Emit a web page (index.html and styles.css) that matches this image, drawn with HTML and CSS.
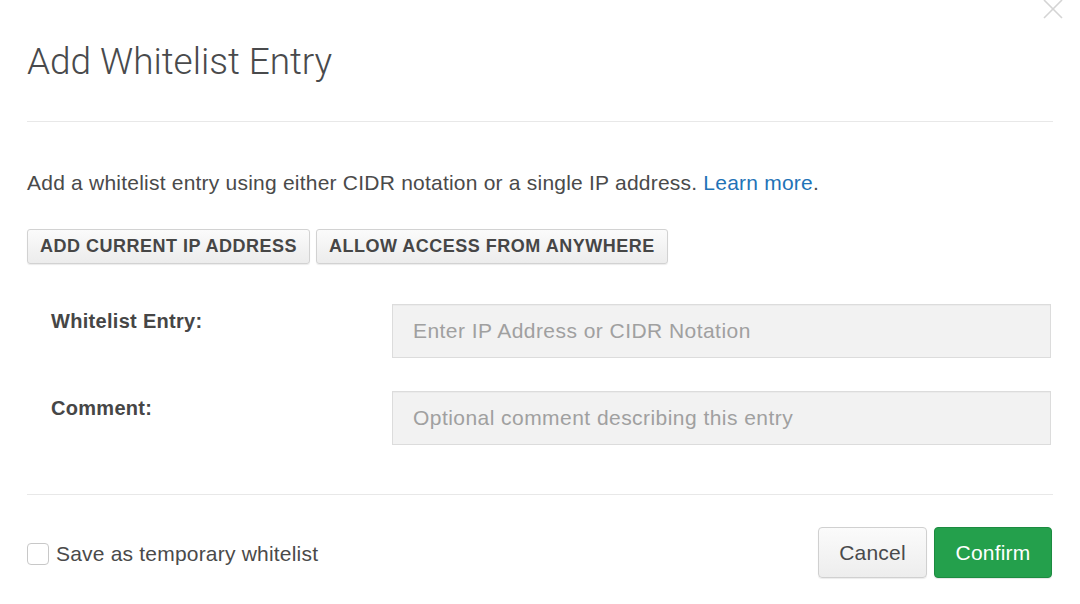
FILE: index.html
```html
<!DOCTYPE html>
<html>
<head>
<meta charset="utf-8">
<link rel="stylesheet" href="styles.css">
</head>
<body>
<div class="modal">
  <button class="close" aria-label="Close">
    <svg width="20" height="20" viewBox="0 0 20 20"><path d="M1 1 L19 19 M19 1 L1 19" stroke="#d4d4d4" stroke-width="1.6" fill="none"/></svg>
  </button>
  <div class="header">
    <h1 class="title">Add Whitelist Entry</h1>
  </div>
  <div class="body">
    <p class="desc">Add a whitelist entry using either CIDR notation or a single IP address. <a href="#" class="link">Learn more</a>.</p>
    <div class="quick">
      <button class="btn-sm">ADD CURRENT IP ADDRESS</button>
      <button class="btn-sm">ALLOW ACCESS FROM ANYWHERE</button>
    </div>
    <div class="form">
      <div class="row">
        <label class="label">Whitelist Entry:</label>
        <input class="input" type="text" placeholder="Enter IP Address or CIDR Notation">
      </div>
      <div class="row">
        <label class="label">Comment:</label>
        <input class="input" type="text" placeholder="Optional comment describing this entry">
      </div>
    </div>
  </div>
  <div class="footer">
    <label class="check">
      <span class="box"></span>
      <span class="check-text">Save as temporary whitelist</span>
    </label>
    <div class="actions">
      <button class="btn btn-default">Cancel</button>
      <button class="btn btn-primary">Confirm</button>
    </div>
  </div>
</div>
</body>
</html>
```

FILE: styles.css
```css
* { box-sizing: border-box; }
html, body { margin: 0; padding: 0; background: #fff; }
body {
  font-family: "Liberation Sans", Arial, sans-serif;
  color: #494a4c;
  width: 1080px;
  height: 604px;
  overflow: hidden;
}
.modal {
  position: relative;
  padding: 0 27px;
}
.close {
  position: absolute;
  top: -1px;
  right: 17px;
  border: 0;
  background: none;
  padding: 0;
  width: 20px;
  height: 20px;
}
.close svg { display: block; }
.header {
  padding-top: 40px;
  padding-bottom: 37px;
  border-bottom: 1px solid #e8e8e8;
}
.title {
  margin: 0;
  font-family: Roboto, "Liberation Sans", sans-serif;
  font-weight: 300;
  font-size: 37px;
  line-height: 44px;
  color: #494a4c;
  letter-spacing: -0.05px;
}
.body {
  padding-top: 49px;
  padding-bottom: 49px;
  border-bottom: 1px solid #e8e8e8;
}
.desc {
  margin: 0;
  font-size: 21px;
  line-height: 24px;
  color: #4a4a4a;
  letter-spacing: 0.22px;
}
.link { color: #1f73b7; text-decoration: none; }
.quick {
  display: flex;
  gap: 6px;
  margin-top: 34px;
}
.btn-sm {
  height: 35px;
  padding: 0 12px;
  font-family: "Liberation Sans", Arial, sans-serif;
  font-weight: bold;
  font-size: 18px;
  color: #464646;
  background: linear-gradient(#fbfbfb, #ececec);
  border: 1px solid #d2d2d2;
  border-radius: 3px;
  box-shadow: 0 1px 1px rgba(0,0,0,0.08);
  letter-spacing: 0.5px;
}
.form {
  margin-top: 40px;
  display: flex;
  flex-direction: column;
  gap: 33px;
}
.row {
  display: flex;
  align-items: flex-start;
}
.label {
  width: 365px;
  padding-left: 24px;
  padding-top: 5px;
  font-weight: bold;
  font-size: 20px;
  line-height: 24px;
  color: #464646;
  letter-spacing: 0.3px;
}
.input {
  width: 659px;
  height: 54px;
  margin: 0;
  padding: 0 20px;
  font-family: "Liberation Sans", Arial, sans-serif;
  font-size: 21px;
  letter-spacing: 0.45px;
  color: #444;
  background: #f2f2f2;
  border: 1px solid #dcdcdc;
  border-radius: 0;
  box-shadow: inset 0 1px 1px rgba(0,0,0,0.03);
  outline: none;
}
.input::placeholder { color: #a0a0a0; }
.footer {
  padding-top: 33px;
  display: flex;
  justify-content: space-between;
  align-items: center;
}
.check {
  display: flex;
  align-items: center;
  gap: 7px;
  margin-top: 2px;
}
.box {
  width: 22px;
  height: 22px;
  border: 1px solid #c8c8c8;
  border-radius: 4px;
  background: #fff;
}
.check-text {
  font-size: 21px;
  line-height: 24px;
  color: #4a4a4a;
  letter-spacing: 0.2px;
}
.actions {
  display: flex;
  gap: 7px;
  margin-right: 1px;
  margin-top: -1px;
}
.btn {
  height: 51px;
  padding: 0 10px;
  font-family: "Liberation Sans", Arial, sans-serif;
  font-size: 21px;
  letter-spacing: 0.2px;
  border-radius: 4px;
}
.btn-default {
  width: 109px;
  color: #494a4c;
  background: linear-gradient(#fbfbfb, #ededed);
  border: 1px solid #d0d0d0;
  box-shadow: 0 1px 1px rgba(0,0,0,0.08);
}
.btn-primary {
  width: 118px;
  color: #fff;
  background: #24a04c;
  border: 1px solid #1c8b40;
  box-shadow: 0 1px 1px rgba(0,0,0,0.1);
}
```
